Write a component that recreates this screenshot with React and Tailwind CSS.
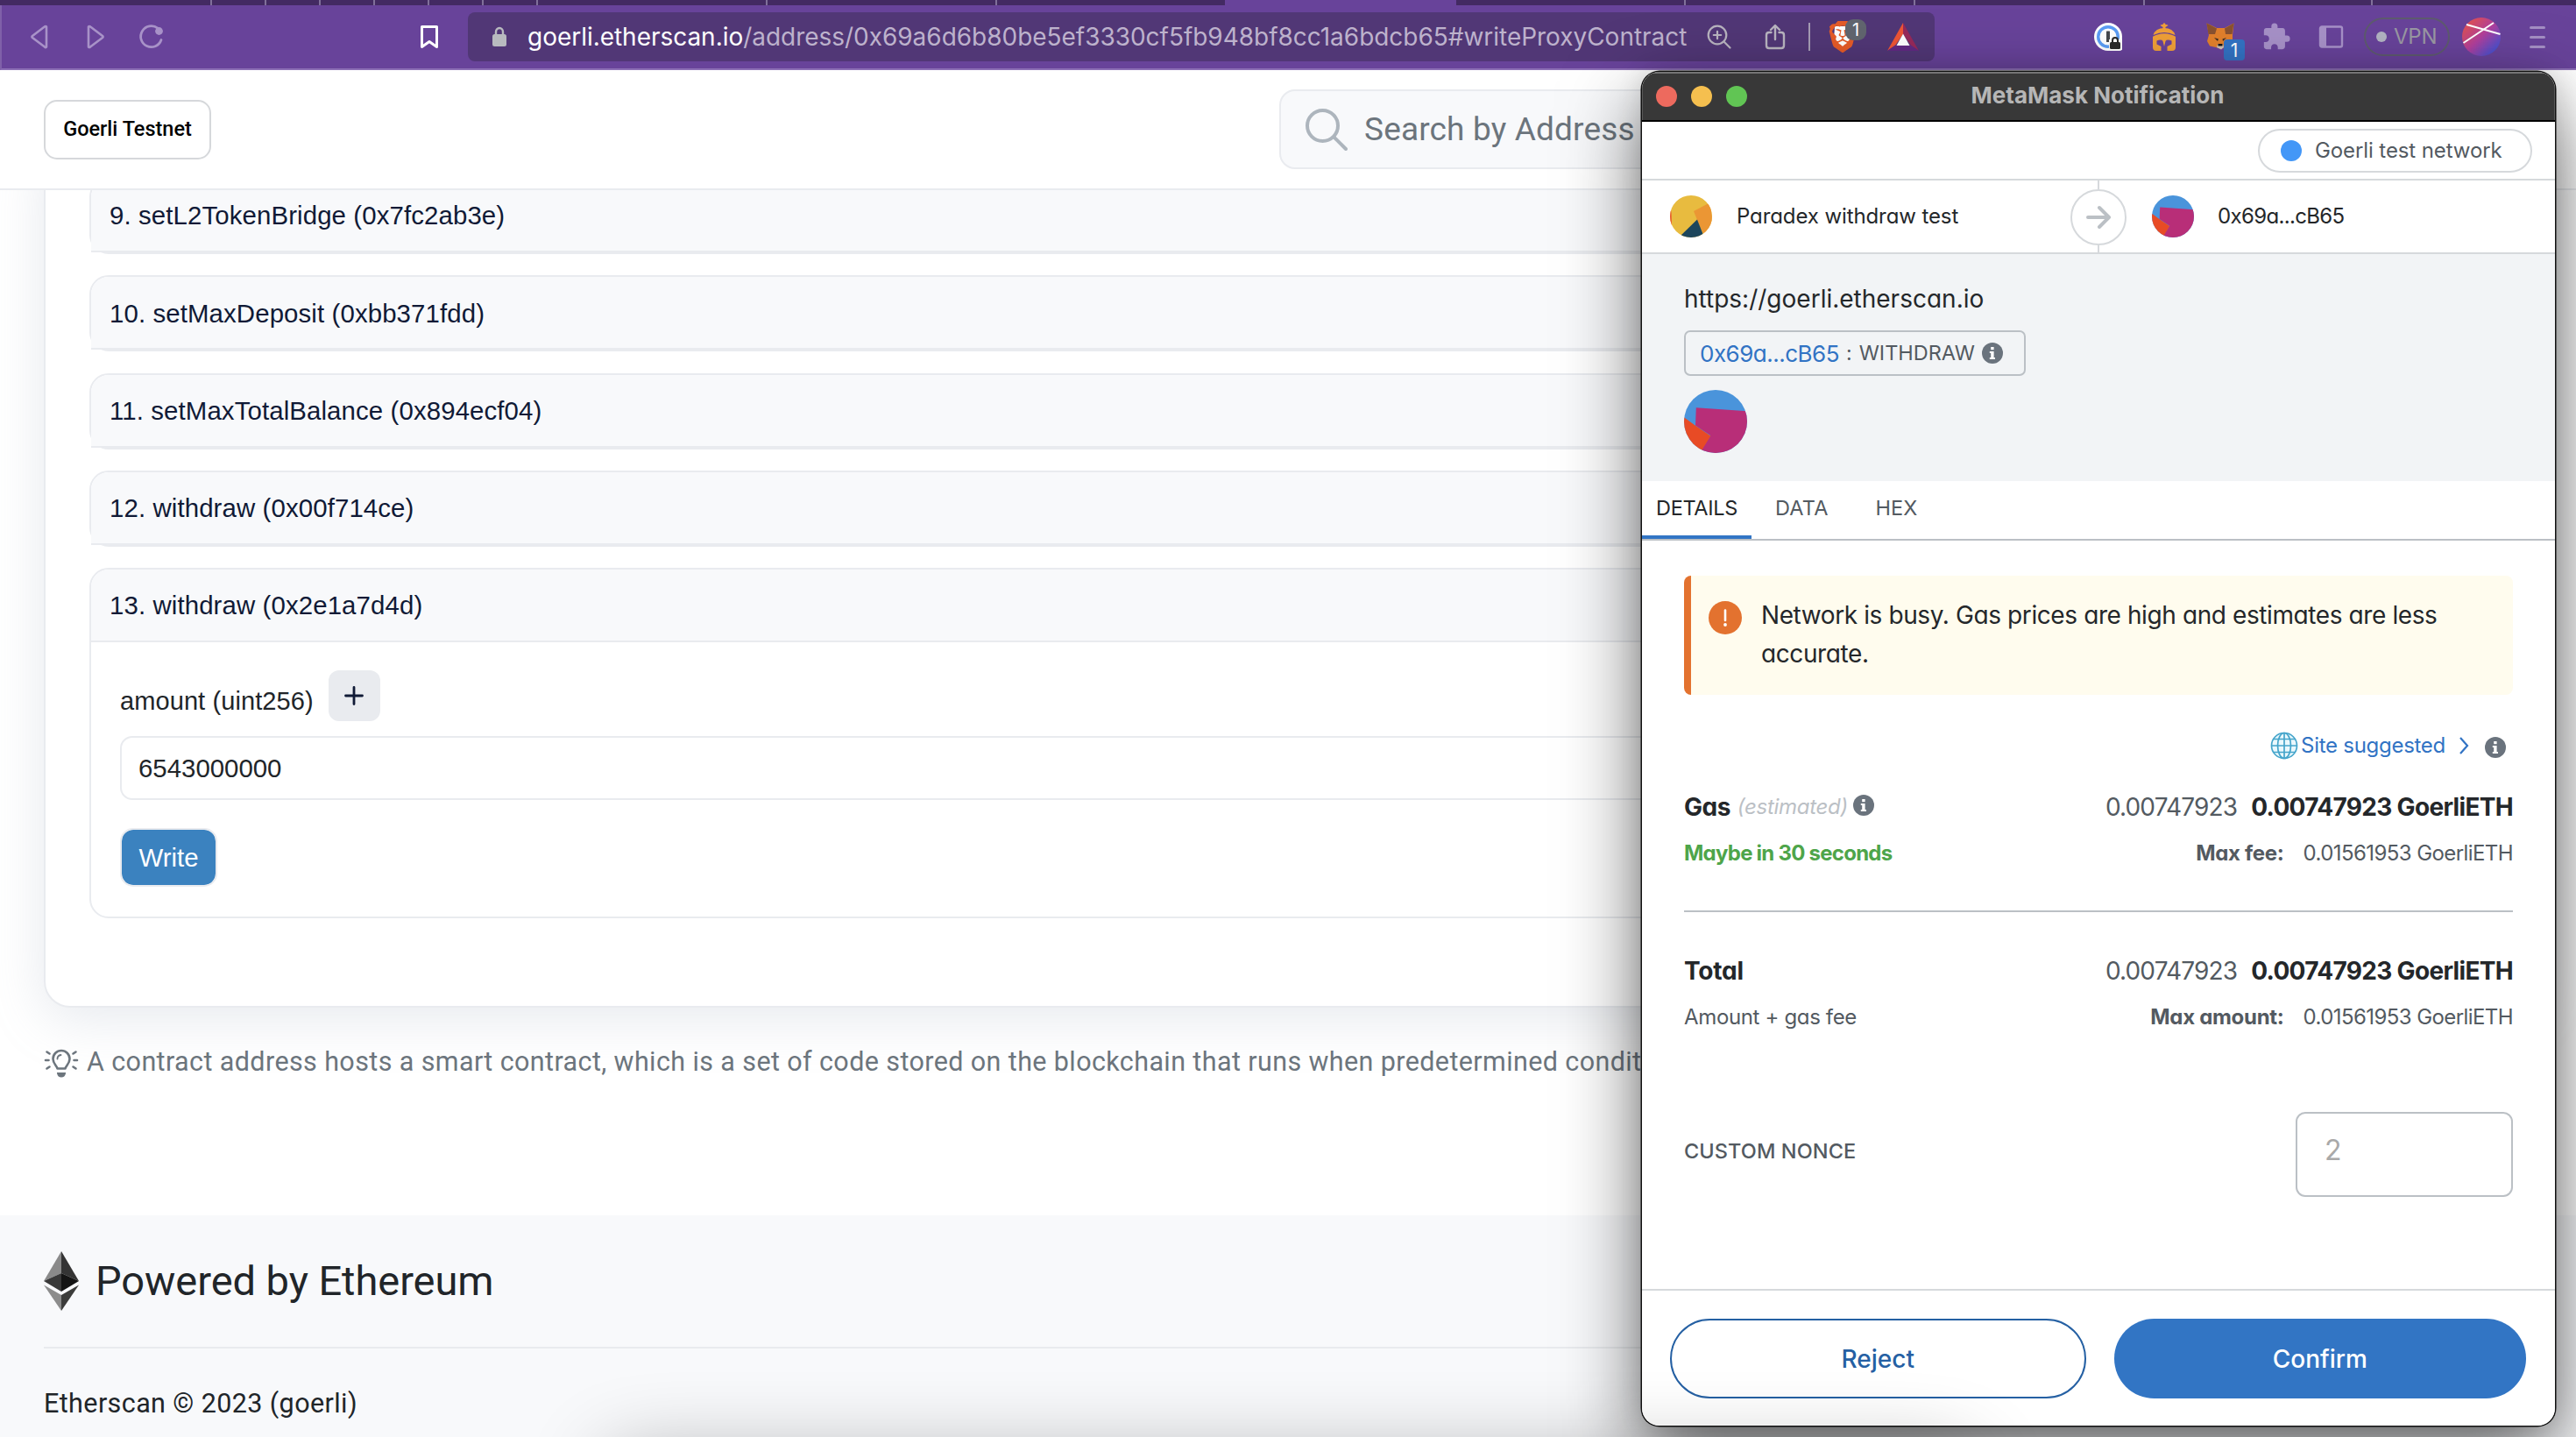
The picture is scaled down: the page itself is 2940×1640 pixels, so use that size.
import React from 'react';
import { SiBrave } from 'react-icons/si';
import { MdExtension } from 'react-icons/md';

/* ---------- browser chrome ---------- */

const TABS = [
  'w-[242px] border-r-2', 'w-[62px] border-r-2', 'w-[62px] border-r-2', 'w-[62px] border-r-2', 'w-[62px] border-r-2',
  'w-[62px] border-r-2', 'w-[62px] border-r-2', 'w-[262px] border-r-2', 'w-[262px] border-r-2', 'w-[260px]',
  'w-[264px] bg-[#68439a]', 'w-[262px] border-r-2', 'w-[262px] border-r-2', 'w-[262px] border-r-2', 'w-[260px] border-r-2', 'flex-1',
];

function TabStrip() {
  return (
    <div className="flex h-[6px] bg-[#432a62]">
      {TABS.map((c, i) => <div key={i} className={`h-full shrink-0 border-[#80709a] ${c}`} />)}
    </div>
  );
}

function NavIcons() {
  return (
    <>
      <svg className="ml-[31px] h-[30px] w-[24px] shrink-0" viewBox="0 0 24 30" fill="none" stroke="#a892c8" strokeWidth="2.6" strokeLinejoin="round">
        <path d="M20 3.5V26.5Q19 27.5 18 26.5L4 16Q3 15 4 14L17.5 3.8Q19 2.5 20 3.5Z" />
      </svg>
      <svg className="ml-[40px] h-[30px] w-[24px] shrink-0" viewBox="0 0 24 30" fill="none" stroke="#a892c8" strokeWidth="2.6" strokeLinejoin="round">
        <path d="M4 3.5V26.5Q5 27.5 6 26.5L20 16Q21 15 20 14L6.500 3.800Q5 2.500 4 3.500Z" />
      </svg>
      <svg className="ml-[36px] h-[30px] w-[32px] shrink-0" viewBox="0 0 32 30" fill="none">
        <path d="M23 5.200A12 12 0 1 0 27 18.500" stroke="#a892c8" strokeWidth="2.8" strokeLinecap="round" />
        <circle cx="24.500" cy="8.500" r="4.400" fill="#a892c8" />
      </svg>
      <svg className="ml-[288px] h-[30px] w-[26px] shrink-0" viewBox="0 0 26 30" fill="none" stroke="#fff" strokeWidth="3" strokeLinejoin="round">
        <path d="M4.500 3.500H21.500V26.500L13 20.500L4.500 26.500Z" />
      </svg>
    </>
  );
}

function UrlBar() {
  return (
    <div className="ml-[31px] flex h-[56px] w-[1674px] shrink-0 items-center rounded-[8px] bg-[#513776] pl-[28px] pr-[17px]">
      <svg className="h-[24px] w-[16px] shrink-0" viewBox="0 0 16 24">
        <path d="M4 11V6.500a4 4.500 0 0 1 8 0V11" fill="none" stroke="#b8babf" strokeWidth="2.400" />
        <rect x="0" y="9" width="16" height="14" rx="2.500" fill="#b8babf" />
      </svg>
      <span className="ml-[24px] whitespace-nowrap text-[28px] leading-[40px] tracking-[-0.03px] text-[#bdb2cc]">
        <span className="text-white">goerli.etherscan.io</span>/address/0x69a6d6b80be5ef3330cf5fb948bf8cc1a6bdcb65#writeProxyContract
      </span>
      <div className="ml-auto flex shrink-0 items-center">
        <svg className="h-[30px] w-[30px]" viewBox="0 0 30 30" fill="none" stroke="#b8b4bf" strokeWidth="2.200" strokeLinecap="round">
          <circle cx="13" cy="13" r="10.300" /><path d="M20.500 20.500L27.500 27.500M13 8.800V17.200M8.800 13H17.200" />
        </svg>
        <svg className="ml-[36px] h-[32px] w-[26px]" viewBox="0 0 26 32" fill="none" stroke="#b8b4bf" strokeWidth="2.400" strokeLinecap="round" strokeLinejoin="round">
          <path d="M8.500 11H6Q3 11 3 14V26Q3 29 6 29H20Q23 29 23 26V14Q23 11 20 11H17.500M13 19V3.500M8 8L13 3L18 8" />
        </svg>
        <div className="ml-[25px] h-[32px] w-[2px] bg-[#a59cb4]" />
        <div className="relative ml-[20px] flex h-[38px] w-[34px] items-center justify-center">
          <svg className="absolute h-[30px] w-[26px]" viewBox="0 0 26 30"><path d="M4 3H22L23 18L13 28L3 18Z" fill="#fff" /></svg>
          <SiBrave className="relative size-[36px] shrink-0 text-[#e55b28]" />
          <span className="absolute left-[20px] top-[-1px] flex size-[24px] items-center justify-center rounded-[9px] bg-[#61656f] text-[20px] leading-none text-white">1</span>
        </div>
        <svg className="ml-[33px] h-[34px] w-[38px]" viewBox="0 0 38 34">
          <polygon points="19,1 1,33 10,27 19,14" fill="#ee5535" />
          <polygon points="19,1 37,33 28,27 19,14" fill="#97295a" />
          <polygon points="1,33 37,33 28,26.500 10,26.500" fill="#622a83" />
          <polygon points="19,13.500 26.500,27 11.500,27" fill="#fff" />
        </svg>
      </div>
    </div>
  );
}

function Extensions() {
  return (
    <>
      <svg className="ml-[182px] size-[32px] shrink-0" viewBox="0 0 32 32">
        <circle cx="16" cy="16" r="16" fill="#fff" /><rect x="16" y="16" width="16" height="16" rx="3" fill="#fff" />
        <circle cx="16" cy="16" r="11.300" fill="none" stroke="#5b9df5" strokeWidth="3.400" />
        <rect x="14" y="9.500" width="4" height="12.500" rx="0.500" fill="#45484d" />
        <rect x="17" y="19" width="15" height="12" fill="#fff" />
        <rect x="18" y="22" width="12" height="8" rx="1.500" fill="#2b2b2b" />
        <path d="M21 22v-2a3 3 0 0 1 6 0v2" fill="none" stroke="#2b2b2b" strokeWidth="2" />
      </svg>
      <svg className="ml-[32px] size-[32px] shrink-0" viewBox="0 0 32 32" fill="#f0a038">
        <path d="M11.500 3Q12 2 14.500 2L15 0.500H17L17.500 2Q20 2 20.500 3L17.500 5V7H14.500V5Z" />
        <path d="M3.500 14Q6 6 16 6Q26 6 28.500 14Q22 11 16 11Q10 11 3.500 14Z" />
        <path d="M3 15.800Q9 12.300 16 12.300Q23 12.300 29 15.800V28Q29 32 25 32H19.500V27L24.500 24.500V20.500Q19 18.500 17.500 21L16 27L14.500 21Q13 18.500 7.500 20.500V24.500L12.500 27V32H7Q3 32 3 28Z" />
      </svg>
      <div className="relative ml-[30px] h-[48px] w-[48px] shrink-0">
        <svg className="absolute left-[2px] top-[8px] h-[32px] w-[32px]" viewBox="0 0 32 32">
          <polygon points="0.500,0.500 12,6 21,6 31.500,0.500 30,14 30,25 22,27 17,30 11,28 4,26.500 1,21 3,14" fill="#e2802c" />
          <polygon points="0.500,0.500 12,6.500 10,13 2.500,13" fill="#8a5230" />
          <polygon points="31.500,0.500 21,6.500 22,13 29.500,13" fill="#8a5230" />
          <polygon points="9,17 14,18.500 13,21" fill="#3a2b24" /><polygon points="23,17 18.500,18.500 19,21" fill="#3a2b24" />
          <polygon points="12,28 13,24.500 19,24.500 20,28 17,30.500" fill="#cdbfb4" /><rect x="13.500" y="24" width="5" height="2.500" fill="#161616" />
        </svg>
        <span className="absolute left-[22px] top-[27px] flex size-[24px] items-center justify-center rounded-[4px] bg-[#3373c4] text-[21px] leading-none text-white">1</span>
      </div>
      <MdExtension className="ml-[17px] size-[34px] shrink-0 text-[#a791c8]" />
      <svg className="ml-[30px] h-[28px] w-[32px] shrink-0" viewBox="0 0 32 28">
        <rect x="3" y="2.500" width="25" height="23" rx="2" fill="none" stroke="#a791c8" strokeWidth="2.400" /><rect x="3" y="2.500" width="7" height="23" fill="#a791c8" />
      </svg>
      <div className="ml-[21px] flex h-[44px] w-[98px] shrink-0 items-center rounded-full border-2 border-[#5d5a6e] pl-[12px] text-[24px] leading-[40px] tracking-[-0.2px] text-[#9a98a3]">
        <span className="mr-[8px] size-[12px] rounded-full bg-[#b2b3c2]" />VPN
      </div>
      <svg className="ml-[14px] size-[44px] shrink-0" viewBox="0 0 44 44">
        <defs><linearGradient id="pf" x1="0" y1="0" x2="1" y2="1"><stop offset="0.100" stopColor="#e2524e" /><stop offset="0.500" stopColor="#b03f9c" /><stop offset="0.900" stopColor="#3f52d2" /></linearGradient></defs>
        <circle cx="22" cy="22" r="22" fill="url(#pf)" />
        <path d="M5 8L43.500 19M1.500 29L36 6" stroke="#fff" strokeWidth="2" />
      </svg>
      <div className="ml-[33px] flex w-[18px] shrink-0 flex-col gap-[8px]">
        <span className="h-[3px] rounded-full bg-[#a48fc4]" /><span className="h-[3px] rounded-full bg-[#a48fc4]" /><span className="h-[3px] rounded-full bg-[#a48fc4]" />
      </div>
    </>
  );
}

function Browser() {
  return (
    <div className="font-['Inter',sans-serif]">
      <TabStrip />
      <div className="flex h-[74px] items-center border-b-2 border-l-2 border-b-[#8c6fb5] border-l-[#7f60a9] bg-[#68439a]">
        <NavIcons />
        <UrlBar />
        <Extensions />
      </div>
    </div>
  );
}

/* ---------- Etherscan page ---------- */

function FnHeader({ children }) {
  return (
    <div className="flex h-[83px] items-center rounded-t-[20px] border-b-2 border-[#e9ebef] bg-[#f8f9fb] pl-[21px] pt-[2px] text-[29.4px] tracking-[0.11px] text-[#101a36]">
      {children}
    </div>
  );
}

const FNS = ['9. setL2TokenBridge (0x7fc2ab3e)', '10. setMaxDeposit (0xbb371fdd)', '11. setMaxTotalBalance (0x894ecf04)', '12. withdraw (0x00f714ce)'];

function ContractCard() {
  return (
    <div className="mx-[50px] -mt-[60px] h-[993px] rounded-[30px] border-2 border-[#e9ebef] bg-white px-[50px] pt-[44px] font-['Liberation_Sans',Arial,sans-serif] shadow-[0_12px_60px_rgba(160,170,190,0.26)]">
      <div className="flex flex-col gap-[24.25px]">
        {FNS.map((f) => (
          <div key={f} className="h-[87px] rounded-[22px] border-2 border-[#e9ebef]"><FnHeader>{f}</FnHeader></div>
        ))}
        <div className="h-[400px] rounded-[22px] border-2 border-[#e9ebef]">
          <FnHeader>13. withdraw (0x2e1a7d4d)</FnHeader>
          <div className="px-[33px] pt-[32px]">
            <div className="flex h-[58px] items-center">
              <span className="mt-[11px] text-[29px] leading-[40px] tracking-[0.09px] text-[#212529]">amount (uint256)</span>
              <span className="ml-[17px] flex h-[58px] w-[59px] items-center justify-center rounded-[12px] bg-[#e9ebef]">
                <svg className="size-[22px]" viewBox="0 0 22 22" stroke="#101a36" strokeWidth="2.800" strokeLinecap="round"><path d="M11 1.500V20.500M1.500 11H20.500" /></svg>
              </span>
            </div>
            <div className="mt-[17px] flex h-[73px] items-center rounded-[14px] border-2 border-[#e9ebef] pl-[19px] pt-[1px] text-[29.400px] text-[#212529]">6543000000</div>
            <div className="mt-[32px] flex h-[67px] w-[111px] items-center justify-center rounded-[15px] border-2 border-[#e9ebef] bg-[#3b82bf] bg-clip-padding pt-[2px] text-[29.400px] text-white">Write</div>
          </div>
        </div>
      </div>
    </div>
  );
}

function Etherscan() {
  return (
    <div className="flex h-[1560px] flex-col overflow-hidden bg-white font-['Roboto',sans-serif]">
      <header className="relative z-10 flex h-[137px] shrink-0 items-center border-b-2 border-[#e9ebef] bg-white px-[50px]">
        <div className="flex h-[68px] w-[191px] shrink-0 items-center justify-center rounded-[15px] border-2 border-[#d6d8db] text-[23.5px] font-medium text-black">Goerli Testnet</div>
        <div className="ml-[1219px] flex h-[91px] w-[1380px] items-center rounded-[18px] border-2 border-[#e9ebef] bg-[#f8f9fb] pl-[28px]">
          <svg className="size-[48px] shrink-0" viewBox="0 0 48 48" fill="none" stroke="#adb5bd" strokeWidth="4" strokeLinecap="round"><circle cx="19.500" cy="19.500" r="17.500" /><path d="M32.500 32.500L46 46" /></svg>
          <span className="ml-[19px] whitespace-nowrap text-[37px] tracking-[0.16px] text-[#6c757d]">Search by Address</span>
        </div>
      </header>
      <main className="h-[1170px] shrink-0">
        <ContractCard />
        <div className="mt-[43px] flex items-center pl-[50px] text-[#6c757d]">
          <svg className="h-[34px] w-[40px] shrink-0" viewBox="0 0 40 34" fill="none" stroke="#6c757d" strokeWidth="2.600" strokeLinecap="round">
            <path d="M15.500 22.500C15 19.500 10.500 17 10.500 11.500A9.500 9.500 0 0 1 29.500 11.500C29.500 17 25 19.500 24.500 22.500Z" strokeLinejoin="round" />
            <path d="M15.500 11.500Q15.500 7.500 19.500 7" strokeWidth="1.800" /><path d="M15 27H25V28Q24 32.500 20 32.500Q16 32.500 15 28Z" fill="#6c757d" stroke="none" />
            <path d="M2 13H5.500M34.500 13H38M3.500 3.500L6.500 5.500M36.500 3.500L33.500 5.500M3.500 22.500L6.500 20.500M36.500 22.500L33.500 20.500" />
          </svg>
          <span className="-mt-[3px] ml-[9px] whitespace-nowrap text-[30.500px] leading-[44px] tracking-[0.39px]">
            A contract address hosts a smart contract, which is a set of code stored on the blockchain that runs when predetermined conditions are met.
          </span>
        </div>
      </main>
      <footer className="relative flex-1 bg-[#f8f9fb] px-[50px] pt-[41px] text-[#212529]">
        <div className="flex h-[68px] items-center">
          <svg className="h-[68px] w-[40px]" viewBox="0 0 40 68">
            <polygon points="20,0 0,34 20,25" fill="#8a8a8a" /><polygon points="20,0 40,34 20,25" fill="#343434" />
            <polygon points="20,25 0,34 20,46" fill="#393939" /><polygon points="20,25 40,34 20,46" fill="#141414" />
            <polygon points="0,38.500 20,50 20,68" fill="#8c8c8c" /><polygon points="40,38.500 20,50 20,68" fill="#3c3c3b" />
          </svg>
          <span className="ml-[19px] mt-[-1px] text-[47px] leading-[60px] tracking-[-0.05px]">Powered by Ethereum</span>
        </div>
        <div className="mt-[41px] h-[2px] bg-[#e9ebee]" />
        <div className="mt-[41px] text-[30.500px] leading-[44px] tracking-[0.4px]">Etherscan © 2023 (goerli)</div>
      </footer>
    </div>
  );
}

/* ---------- MetaMask window ---------- */

function AvatarGold() {
  return (
    <svg className="size-[48px] shrink-0" viewBox="0 0 48 48">
      <defs><clipPath id="ag"><circle cx="24" cy="24" r="24" /></clipPath></defs>
      <g clipPath="url(#ag)">
        <rect width="48" height="48" fill="#e8bb3f" />
        <polygon points="0,10 1.500,20 2,34 0,36" fill="#e8552d" />
        <polygon points="46,8 27,18 31,28 39,46 50,44" fill="#eb9634" />
        <polygon points="31,27.500 9,49 39.500,49" fill="#1c455c" />
      </g>
    </svg>
  );
}

function AvatarPink({ className }) {
  return (
    <svg className={`shrink-0 ${className}`} viewBox="0 0 72 72">
      <defs><clipPath id="ap"><circle cx="36" cy="36" r="36" /></clipPath></defs>
      <g clipPath="url(#ap)">
        <rect width="72" height="72" fill="#4a94db" />
        <polygon points="13.800,20.300 73,24.300 73,73 18,73 20.700,67 30.300,52 13,40.500" fill="#b82e78" />
        <polygon points="-1,30.500 13,40.800 30.300,52.500 19.500,70 -1,73" fill="#e84b25" />
      </g>
    </svg>
  );
}

function Info() {
  return (
    <svg className="size-[24px] shrink-0" viewBox="0 0 24 24">
      <circle cx="12" cy="12" r="12" fill="#6a737d" />
      <rect x="10.200" y="5" width="3.400" height="3.200" fill="#fff" />
      <path d="M8.800 10H13.600V17H15V19H8.800V17H10.200V12H8.800Z" fill="#fff" />
    </svg>
  );
}

function Globe() {
  return (
    <svg className="size-[32px] shrink-0" viewBox="0 0 32 32" fill="none" stroke="#45a5cb" strokeWidth="1.700">
      <circle cx="16" cy="16" r="14.500" fill="#eaf8fd" /><ellipse cx="16" cy="16" rx="7.500" ry="14.500" />
      <path d="M16 1.500V30.500M1.500 16H30.500M4 8.500H28M4 23.500H28" />
    </svg>
  );
}

function FeeRows({ title, sub, maxLabel }) {
  return (
    <>
      <div className="flex h-[40px] items-center text-[28px] leading-[40px]">
        {title}
        <span className="ml-auto tracking-[-0.85px] text-[#535a61]">0.00747923</span>
        <span className="ml-[16px] font-bold tracking-[-0.68px] text-[#24272a]">0.00747923 GoerliETH</span>
      </div>
      <div className="mt-[15px] flex h-[36px] items-center text-[24px] leading-[36px] text-[#535a61]">
        {sub}
        <span className="ml-auto font-bold tracking-[-0.3px]">{maxLabel}</span>
        <span className="ml-[22px] tracking-[-0.58px]">0.01561953 GoerliETH</span>
      </div>
    </>
  );
}

function MetaMask() {
  return (
    <div className="absolute left-[1874px] top-[82px] z-20 flex h-[1545px] w-[1042px] flex-col overflow-hidden rounded-[20px] bg-white font-['Inter',sans-serif] text-[24px] text-[#24272a] [font-feature-settings:'cv11']">
      <div className="flex h-[57px] shrink-0 items-center border-b-2 border-black bg-[#383838] px-[16px] shadow-[inset_0_2px_0_#757575,inset_1px_0_0_#5a5a5a,inset_-1px_0_0_#5a5a5a]">
        <div className="flex w-[104px] gap-[16px]">
          <span className="size-[24px] rounded-full bg-[#ed6a5e]" /><span className="size-[24px] rounded-full bg-[#f5bf4f]" /><span className="size-[24px] rounded-full bg-[#61c554]" />
        </div>
        <div className="mt-[-3px] flex-1 pr-[106px] text-center text-[26px] font-bold text-[#b6b6b6] [font-feature-settings:normal]">MetaMask Notification</div>
      </div>

      <div className="flex h-[67px] shrink-0 items-center justify-end border-b-2 border-[#d6d9dc] pr-[26px]">
        <div className="flex h-[50px] w-[313px] items-center rounded-full border-2 border-[#d6d9dc] pl-[24px] tracking-[-0.1px] text-[#535a61]">
          <span className="mr-[15px] size-[24px] rounded-full bg-[#4397f7]" />Goerli test network
        </div>
      </div>

      <div className="flex h-[84px] shrink-0 items-center border-b-2 border-[#d6d9dc]">
        <div className="flex w-[489px] items-center pl-[32px]"><AvatarGold /><span className="ml-[28px] tracking-[-0.1px]">Paradex withdraw test</span></div>
        <div className="flex h-full w-[64px] flex-col items-center">
          <span className="h-[10px] w-[2px] bg-[#d6d9dc]" />
          <span className="flex size-[64px] items-center justify-center rounded-full border-2 border-[#d6d9dc]">
            <svg className="size-[30px]" viewBox="0 0 30 30" fill="none" stroke="#bbc0c5" strokeWidth="4" strokeLinecap="round" strokeLinejoin="round"><path d="M3 15H26M16 4L27 15L16 26" /></svg>
          </span>
          <span className="w-[2px] flex-1 bg-[#d6d9dc]" />
        </div>
        <AvatarPink className="ml-[29px] size-[48px]" />
        <span className="ml-[27px] tracking-[-0.65px]">0x69a...cB65</span>
      </div>

      <div className="flex h-[259px] shrink-0 flex-col items-start bg-[#f2f4f6] pl-[48px] pt-[31px]">
        <span className="h-[40px] text-[28px] leading-[40px]">https://goerli.etherscan.io</span>
        <div className="mt-[16px] flex h-[52px] items-center whitespace-pre rounded-[7px] border-2 border-[#bbc0c5] pl-[16px] pr-[24px] text-[#535a61]">
          <span className="text-[26px] tracking-[-0.5px] text-[#3173c4]">0x69a...cB65</span>
          <span className="ml-[8px] text-[23px]">:</span><span className="ml-[8px] mr-[8px] text-[23.500px]">WITHDRAW</span><Info />
        </div>
        <div className="mt-[16px]"><AvatarPink className="size-[72px]" /></div>
      </div>

      <div className="flex h-[68px] shrink-0 border-b-2 border-[#bbc0c5] text-[23.500px] text-[#535a61]">
        <span className="flex h-[66px] w-[125px] items-center border-b-4 border-[#3275c5] pl-[16px] tracking-[-0.3px] text-[#24272a]">DETAILS</span>
        <span className="flex h-[62px] items-center pl-[27px] tracking-[0.2px]">DATA</span>
        <span className="flex h-[62px] items-center pl-[54px]">HEX</span>
      </div>

      <div className="flex flex-1 flex-col px-[48px] pt-[40px]">
        <div className="flex h-[136px] shrink-0 rounded-[8px] border-l-8 border-[#e3722f] bg-[#fffcee] pl-[20px] pt-[23px]">
          <svg className="mt-[6px] size-[38px] shrink-0" viewBox="0 0 38 38"><circle cx="19" cy="19" r="19" fill="#e3722f" /><path d="M19 10.500V22" stroke="#fff" strokeWidth="2.600" strokeLinecap="round" /><circle cx="19" cy="27" r="1.900" fill="#fff" /></svg>
          <p className="ml-[22px] whitespace-nowrap text-[28px] leading-[44px] tracking-[-0.4px]">Network is busy. Gas prices are high and estimates are less<br />accurate.</p>
        </div>

        <div className="mt-[40px] flex h-[36px] shrink-0 items-center justify-end pr-[8px] tracking-[-0.28px] text-[#3173c4]">
          <Globe /><span className="ml-[3px]">Site suggested</span>
          <svg className="ml-[15px] mr-[18px] h-[20px] w-[12px]" viewBox="0 0 12 20" fill="none" stroke="#3173c4" strokeWidth="2.200"><path d="M2 1L10 10L2 19" /></svg>
          <span className="mt-[4px]"><Info /></span>
        </div>

        <div className="mt-[32px]">
          <FeeRows
            title={<><b className="tracking-[-0.5px]">Gas</b><i className="ml-[8px] mr-[6px] text-[24px] tracking-[-0.3px] text-[#bbc0c5]">(estimated)</i><span className="mb-[4px]"><Info /></span></>}
            sub={<b className="tracking-[-0.75px] text-[#4ea54a]">Maybe in 30 seconds</b>}
            maxLabel="Max fee:"
          />
        </div>
        <div className="mt-[47px] h-[2px] shrink-0 bg-[#bbc0c5]" />
        <div className="mt-[47px]">
          <FeeRows title={<b className="tracking-[-0.2px]">Total</b>} sub={<span className="tracking-[-0.35px]">Amount + gas fee</span>} maxLabel="Max amount:" />
        </div>

        <div className="mt-[90px] flex h-[97px] items-start justify-between">
          <span className="mt-[27px] text-[23.500px] font-medium leading-[36px] tracking-[0.1px] text-[#535a61]">CUSTOM NONCE</span>
          <span className="h-[97px] w-[248px] rounded-[11px] border-2 border-[#bbc0c5] pl-[31px] pt-[22px] text-[32px] leading-[40px] text-[#a9a9a9]">2</span>
        </div>
      </div>

      <div className="flex h-[156px] shrink-0 gap-[32px] border-t-2 border-[#d6d9dc] pl-[32px] pr-[33px] pt-[32px] text-[28px] font-medium">
        <span className="flex h-[91px] flex-1 items-center justify-center rounded-full border-2 border-[#2560a3] text-[#2560a3]">Reject</span>
        <span className="flex h-[91px] flex-1 items-center justify-center rounded-full bg-[#3275c4] text-white">Confirm</span>
      </div>
    </div>
  );
}

export default function App() {
  return (
    <div className="relative h-[1640px] w-[2940px] overflow-hidden bg-white">
      <Browser />
      <Etherscan />
      <div className="absolute left-[1874px] top-[82px] z-10 h-[1545px] w-[1042px] rounded-[20px] shadow-[0_0_0_1.5px_#111,0_36px_90px_rgba(0,0,0,0.6),0_0_30px_rgba(0,0,0,0.12)]" />
      <MetaMask />
      <div className="pointer-events-none absolute left-[690px] top-[1660px] z-30 h-[80px] w-[1560px] rounded-[30px] shadow-[0_0_90px_rgba(0,0,0,0.3)]" />
    </div>
  );
}
